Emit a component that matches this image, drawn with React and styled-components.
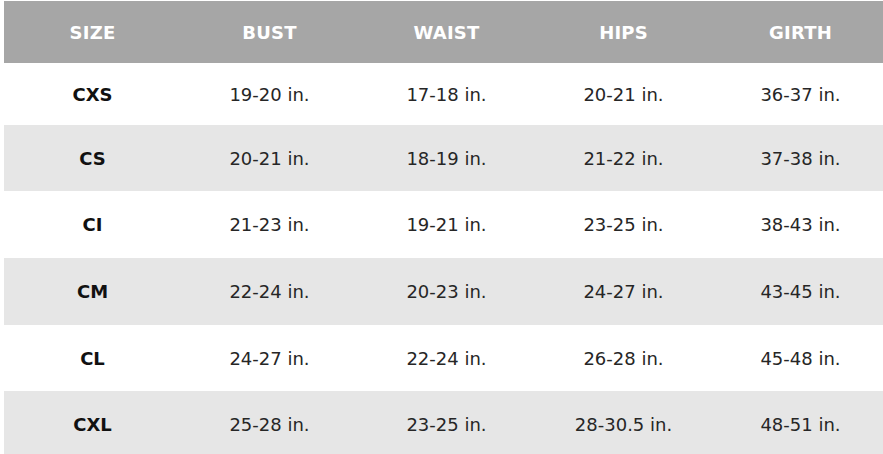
import React from "react";
import styled, { createGlobalStyle } from "styled-components";

const GlobalStyle = createGlobalStyle`
  html, body {
    margin: 0;
    padding: 0;
    background: #ffffff;
    overflow: hidden;
  }
`;

const Page = styled.div`
  width: 883px;
  height: 454px;
  padding: 1px 0 0 4px;
  box-sizing: border-box;
  overflow: hidden;
  font-family: "DejaVu Sans", "Liberation Sans", sans-serif;
`;

const Table = styled.div`
  width: 885px;
  display: flex;
  flex-flow: column;
`;

const Row = styled.div`
  display: grid;
  grid-template-columns: repeat(5, 177px);
  align-items: center;
  height: ${(p) => p.h}px;
  background-color: ${(p) => (p.shaded ? "#e6e6e6" : "#ffffff")};
`;

const HeaderRow = styled(Row)`
  background-color: #a6a6a6;
`;

const HeadCell = styled.div`
  text-align: center;
  color: #ffffff;
  font-weight: 700;
  font-size: 18px;
  letter-spacing: 0.2px;
`;

const SizeCell = styled.div`
  text-align: center;
  color: #111111;
  font-weight: 700;
  font-size: 18px;
`;

const Cell = styled.div`
  text-align: center;
  color: #262626;
  font-size: 18px;
  font-weight: 400;
`;

const columns = ["SIZE", "BUST", "WAIST", "HIPS", "GIRTH"];

const rows = [
  { size: "CXS", h: 62, vals: ["19-20 in.", "17-18 in.", "20-21 in.", "36-37 in."] },
  { size: "CS", h: 66, vals: ["20-21 in.", "18-19 in.", "21-22 in.", "37-38 in."] },
  { size: "CI", h: 67, vals: ["21-23 in.", "19-21 in.", "23-25 in.", "38-43 in."] },
  { size: "CM", h: 67, vals: ["22-24 in.", "20-23 in.", "24-27 in.", "43-45 in."] },
  { size: "CL", h: 66, vals: ["24-27 in.", "22-24 in.", "26-28 in.", "45-48 in."] },
  { size: "CXL", h: 67, vals: ["25-28 in.", "23-25 in.", "28-30.5 in.", "48-51 in."] },
];

export default function App() {
  return (
    <Page>
      <GlobalStyle />
      <Table>
        <HeaderRow h={62}>
          {columns.map((c) => (
            <HeadCell key={c}>{c}</HeadCell>
          ))}
        </HeaderRow>
        {rows.map((r, i) => (
          <Row key={r.size} h={r.h} shaded={i % 2 === 1}>
            <SizeCell>{r.size}</SizeCell>
            {r.vals.map((v, j) => (
              <Cell key={j}>{v}</Cell>
            ))}
          </Row>
        ))}
      </Table>
    </Page>
  );
}
